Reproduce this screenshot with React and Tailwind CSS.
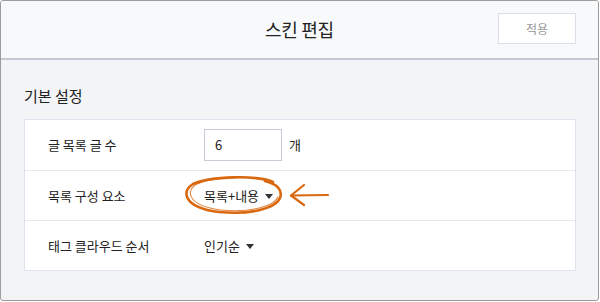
import React from 'react'

const font = { fontFamily: '"Noto Sans CJK KR", "Noto Sans", sans-serif' }

const Caret = () => (
  <svg width="8" height="5" viewBox="0 0 8 5" className="ml-[6px] mt-[2px]">
    <path d="M0 0 L8 0 L4 5 Z" fill="#333" />
  </svg>
)

const Scribble = () => (
  <svg width="170" height="50" viewBox="0 0 170 50" className="absolute left-[156px] top-[0px] pointer-events-none">
    <g fill="none" stroke="#d9680f" strokeLinecap="round">
      <path d="M92 11 C 76 4, 30 5, 12 13 C -1 21, 4 37, 38 41 C 68 44, 94 38, 99 27 C 102 19, 96 13, 84 10" strokeWidth="2.6" />
      <path d="M88 9 C 68 4, 28 6, 14 14 C 4 22, 9 35, 40 39 C 70 42, 93 35, 97 26" strokeWidth="1.1" opacity="0.8" />
      <path d="M147 24 L 110 24.5" strokeWidth="2.2" />
      <path d="M123 14 L 110 24.5 L 123 34" strokeWidth="2.2" strokeLinejoin="round" />
    </g>
  </svg>
)

const Row = ({ label, children, first }) => (
  <div className={'relative flex items-center h-[50px] pl-[23px] ' + (first ? '' : 'border-t border-[#e6e9ee]')}>
    <div className="w-[156px] text-[13px] text-[#222]">{label}</div>
    {children}
  </div>
)

export default function App() {
  return (
    <div className="w-[600px] h-[302px] bg-white" style={font}>
      <div className="w-[599px] h-[301px] border border-[#9c9c9c] rounded-[3px] overflow-hidden flex flex-col bg-[#f3f4f6]">
        <div className="relative h-[59px] shrink-0 bg-[#f8f9fb] border-b-2 border-[#c3c8d2] flex items-center justify-center">
          <h1 className="text-[18px] text-[#222] tracking-[-0.3px]">스킨 편집</h1>
          <button className="absolute right-[22px] top-[12px] w-[78px] h-[31px] bg-white border border-[#dbe0e8] text-[12px] text-[#999]">
            적용
          </button>
        </div>
        <div className="flex-1 pl-[23px] pr-[22px] pt-[26px]">
          <h2 className="text-[15px] leading-[20px] text-[#222] mb-[13px]">기본 설정</h2>
          <div className="bg-white border border-[#dde3ec]">
            <Row label="글 목록 글 수" first>
              <div className="w-[78px] h-[32px] border border-[#c6ccd6] flex items-center pl-[10px] text-[13px] text-[#222]">6</div>
              <span className="ml-[7px] text-[13px] text-[#222]">개</span>
            </Row>
            <Row label="목록 구성 요소">
              <span className="text-[13px] text-[#222]">목록+내용</span>
              <Caret />
              <Scribble />
            </Row>
            <Row label="태그 클라우드 순서">
              <span className="text-[13px] text-[#222]">인기순</span>
              <Caret />
            </Row>
          </div>
        </div>
      </div>
    </div>
  )
}
